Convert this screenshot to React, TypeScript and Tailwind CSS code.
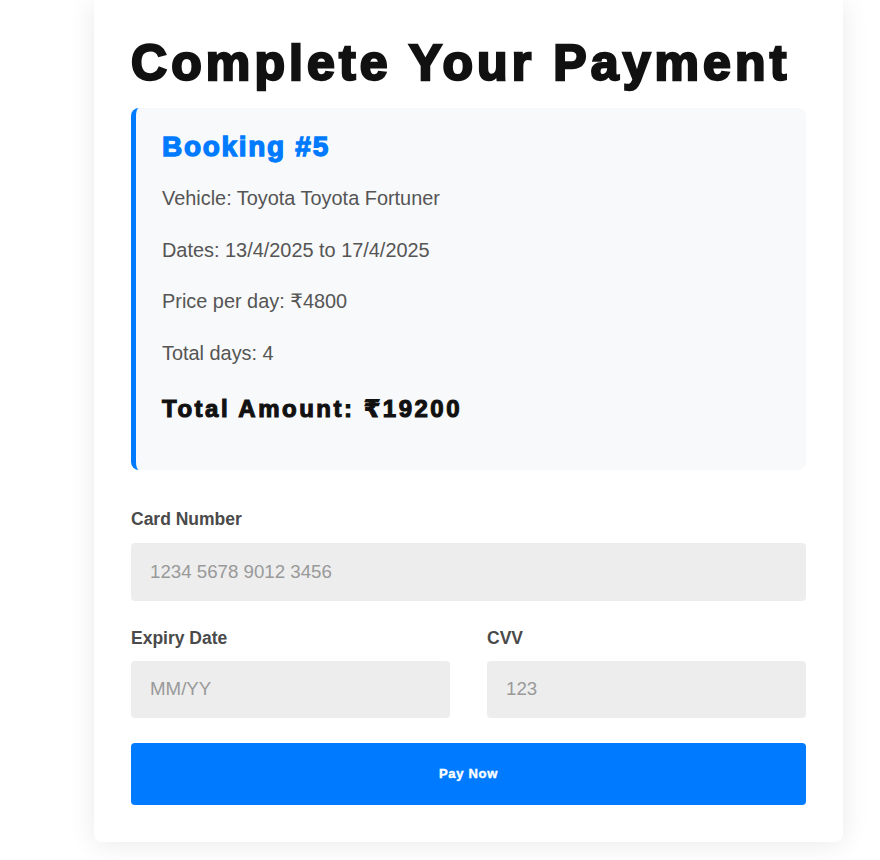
import React from "react";

const PaymentForm = () => {
  return (
    <div className="ml-[94px] w-[749px] rounded-b-lg bg-white px-[37px] pt-[33px] pb-[37px] shadow-[0_2px_28px_rgba(0,0,0,0.09)]">
      <h1 className="text-[50px] leading-[60px] font-bold tracking-[4.1px] text-[#111] [-webkit-text-stroke:2.4px_#111]">
        Complete Your Payment
      </h1>

      <div className="mt-[15px] rounded-lg border-l-[5px] border-[#007bff] bg-[#f8f9fa] pt-[22px] pb-[46px] pl-[26px] pr-6">
        <h3 className="text-[28px] leading-[34px] font-bold tracking-[1.7px] text-[#007bff] [-webkit-text-stroke:1.3px_#007bff]">
          Booking #5
        </h3>
        <div className="mt-[20px] flex flex-col gap-[23.6px] text-[19.9px] leading-[28px] text-[#555]">
          <p>Vehicle: Toyota Toyota Fortuner</p>
          <p>Dates: 13/4/2025 to 17/4/2025</p>
          <p>Price per day: ₹4800</p>
          <p>Total days: 4</p>
        </div>
        <h3 className="mt-[27px] text-[24px] leading-[30px] font-bold tracking-[2.5px] text-[#111] [-webkit-text-stroke:1.1px_#111]">
          Total Amount: ₹19200
        </h3>
      </div>

      <form className="mt-[39.6px]" onSubmit={(e) => e.preventDefault()}>
        <label className="block text-[17.5px] leading-[20px] font-bold text-[#4a4a4a]">
          Card Number
        </label>
        <input
          className="mt-[13.4px] block h-[58px] w-full rounded bg-[#ededed] px-[19px] text-[18.7px] text-[#333] placeholder:text-[#999] outline-none"
          placeholder="1234 5678 9012 3456"
        />

        <div className="mt-[27px] grid grid-cols-2 gap-[37px]">
          <div>
            <label className="block text-[17.5px] leading-[20px] font-bold text-[#4a4a4a]">
              Expiry Date
            </label>
            <input
              className="mt-[13px] block h-[57px] w-full rounded bg-[#ededed] px-[19px] text-[18.7px] text-[#333] placeholder:text-[#999] outline-none"
              placeholder="MM/YY"
            />
          </div>
          <div>
            <label className="block text-[17.5px] leading-[20px] font-bold text-[#4a4a4a]">
              CVV
            </label>
            <input
              className="mt-[13px] block h-[57px] w-full rounded bg-[#ededed] px-[19px] text-[18.7px] text-[#333] placeholder:text-[#999] outline-none"
              placeholder="123"
            />
          </div>
        </div>

        <button
          type="submit"
          className="mt-[25px] flex h-[62px] w-full items-center justify-center rounded bg-[#007bff] text-[13px] font-bold tracking-[0.7px] text-white [-webkit-text-stroke:0.4px_#fff]"
        >
          Pay Now
        </button>
      </form>
    </div>
  );
};

export default function App() {
  return (
    <div className="min-h-[860px] bg-white font-['Liberation_Sans','DejaVu_Sans',sans-serif]">
      <PaymentForm />
    </div>
  );
}
